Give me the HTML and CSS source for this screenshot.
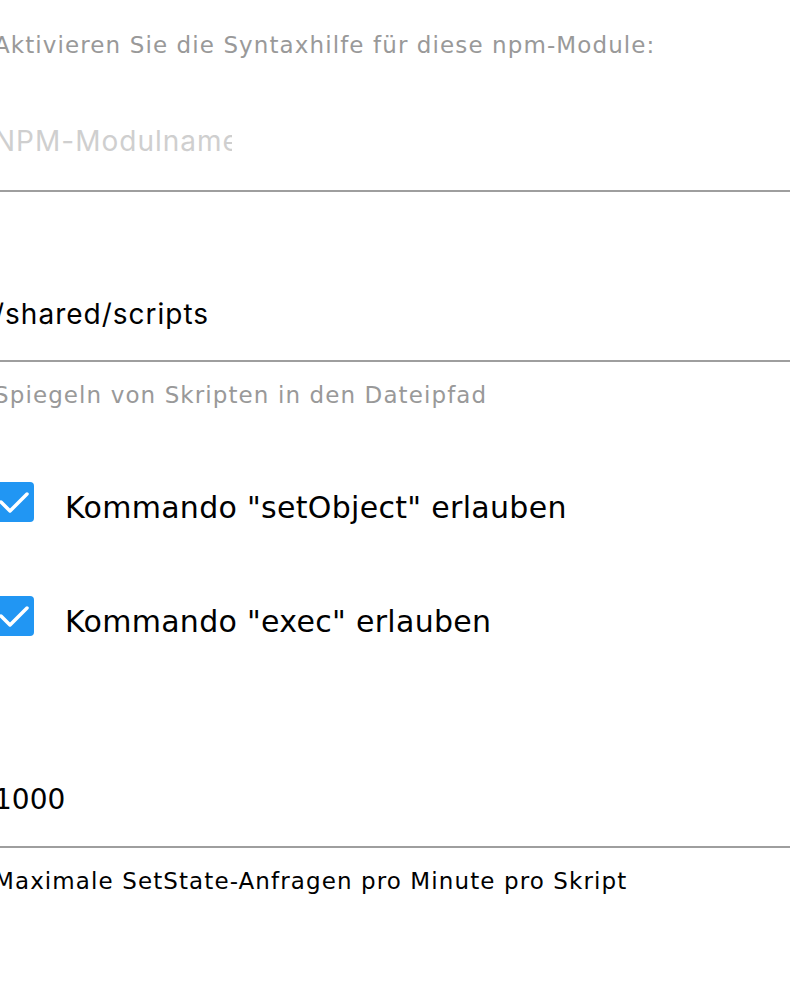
FILE: index.html
```html
<!DOCTYPE html>
<html>
	<head>
		<meta charset="UTF-8" />
		<title>Einstellungen</title>
		<link rel="stylesheet" href="styles.css">
	</head>
	<body>
		<main class="settings">
			<div class="field">
				<p class="hint hint-top">Aktivieren Sie die Syntaxhilfe für diese npm-Module:</p>
				<div class="input-line input-modules">
					<input class="text-input narrow" type="text" placeholder="NPM-Modulname">
				</div>
			</div>
			<div class="field">
				<div class="input-line input-mirror">
					<input class="text-input" type="text" value="/shared/scripts">
				</div>
				<p class="hint">Spiegeln von Skripten in den Dateipfad</p>
			</div>
			<label class="check check-first">
				<span class="box">
					<svg viewBox="0 0 40 40" width="40" height="40"><polyline points="7,20 16,29 33,12" fill="none" stroke="#fff" stroke-width="3.5" stroke-linecap="round" stroke-linejoin="round"/></svg>
				</span>
				<span class="check-text">Kommando "setObject" erlauben</span>
			</label>
			<label class="check">
				<span class="box">
					<svg viewBox="0 0 40 40" width="40" height="40"><polyline points="7,20 16,29 33,12" fill="none" stroke="#fff" stroke-width="3.5" stroke-linecap="round" stroke-linejoin="round"/></svg>
				</span>
				<span class="check-text">Kommando "exec" erlauben</span>
			</label>
			<div class="field">
				<div class="input-line input-limit">
					<input class="text-input number" type="text" value="1000">
				</div>
				<p class="hint hint-dark">Maximale SetState-Anfragen pro Minute pro Skript</p>
			</div>
		</main>
	</body>
</html>
```

FILE: styles.css
```css
* {
	margin: 0;
	padding: 0;
	box-sizing: border-box;
}
body {
	font-family: "DejaVu Sans", Verdana, sans-serif;
	background-color: #fff;
	color: #000;
}
.settings {
	display: flex;
	flex-direction: column;
	margin-left: -6px;
}
.hint {
	font-size: 23px;
	line-height: 25px;
	letter-spacing: 1.1px;
	color: #999;
	margin-top: 21px;
	white-space: nowrap;
}
.hint-top {
	margin-top: 33px;
}
.hint-dark {
	color: #000;
}
.input-line {
	border-bottom: 2px solid #9e9e9e;
	padding-bottom: 33px;
}
.input-modules {
	padding-top: 68px;
	padding-bottom: 34px;
}
.input-mirror {
	padding-top: 107px;
	padding-bottom: 31px;
}
.input-limit {
	padding-top: 146px;
	padding-bottom: 30px;
}
.text-input {
	display: block;
	width: 100%;
	height: 30px;
	border: none;
	outline: none;
	background: transparent;
	padding: 0;
	font-family: Inter, "Liberation Sans", sans-serif;
	font-size: 28px;
	letter-spacing: 1px;
	color: #000;
}
.text-input::placeholder {
	color: #cfcfcf;
}
.text-input.narrow {
	width: 238px;
}
.text-input.number {
	height: 34px;
	font-family: "DejaVu Sans", Verdana, sans-serif;
	font-size: 28px;
	letter-spacing: 0;
}
.check {
	display: flex;
	align-items: flex-start;
	height: 40px;
	margin-top: 74px;
	cursor: pointer;
}
.box {
	width: 40px;
	height: 40px;
	border-radius: 4px;
	background-color: #2196f3;
	flex-shrink: 0;
}
.box svg {
	display: block;
}
.check-text {
	font-size: 30px;
	line-height: 40px;
	letter-spacing: 0.3px;
	padding-top: 6px;
	margin-left: 31px;
	white-space: nowrap;
}
```
